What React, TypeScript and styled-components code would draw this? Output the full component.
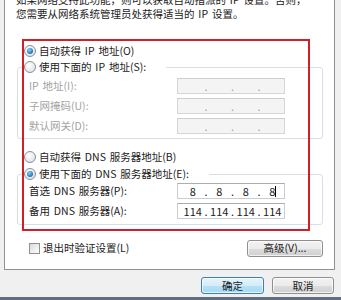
import React from "react";
import styled, { createGlobalStyle } from "styled-components";

const Global = createGlobalStyle`
  html, body { margin: 0; padding: 0; background: #f0f0f0; }
  * { box-sizing: border-box; }
`;

const Root = styled.div`
  position: relative;
  width: 341px;
  height: 300px;
  overflow: hidden;
  background: #f0f0f0;
  display: flex;
  flex-direction: column;
  font-family: "Noto Sans CJK SC", "Liberation Sans", sans-serif;
  font-size: 10.5px;
  word-spacing: 1.5px;
  color: #1a1a1a;
`;

const Panel = styled.div`
  margin: -10px 6px 0 4px;
  height: 280px;
  flex: none;
  background: #ffffff;
  border: 1px solid #8e9297;
  display: flex;
  flex-direction: column;
`;

const Intro = styled.div`
  margin-top: 2px;
  padding-left: 11px;
  line-height: 14px;
  white-space: nowrap;
`;

const Content = styled.div`
  padding: 0 11px 0 12px;
  display: flex;
  flex-direction: column;
`;

const OptionRow = styled.div<{ $top: number }>`
  margin-top: ${(p) => p.$top}px;
  padding-left: 7px;
  height: 14px;
  display: flex;
  align-items: center;
  line-height: 14px;
  white-space: nowrap;
`;

const Radio = styled.span<{ $on?: boolean }>`
  width: 12px;
  height: 12px;
  border-radius: 50%;
  border: 1px solid #8a8f96;
  background: radial-gradient(circle at 40% 35%, #ffffff 0%, #e4e6e8 70%, #d0d3d6 100%);
  display: inline-flex;
  align-items: center;
  justify-content: center;
  margin-right: 3px;
  flex: none;
  &::after {
    content: "";
    display: ${(p) => (p.$on ? "block" : "none")};
    width: 6px;
    height: 6px;
    border-radius: 50%;
    background: radial-gradient(circle at 40% 35%, #8fd0f7 0%, #2b7fc4 60%, #1a4f86 100%);
  }
`;

const Group = styled.fieldset<{ $top: number; $pt: number; $pb: number }>`
  margin: ${(p) => p.$top}px 0 0 0;
  padding: ${(p) => p.$pt}px 0 ${(p) => p.$pb}px 0;
  border: 1px solid #d5dfe5;
  border-radius: 3px;
  min-inline-size: 0;
  display: flex;
  flex-direction: column;
  gap: 4px;
`;

const Legend = styled.legend`
  margin-left: 6px;
  padding: 0 20px 0 0;
  height: 14px;
  line-height: 14px;
  display: flex;
  align-items: center;
  white-space: nowrap;
`;

const FieldRow = styled.div`
  display: grid;
  grid-template-columns: 148px 108px;
  align-items: center;
  height: 16px;
  padding-left: 11px;
`;

const FieldLabel = styled.span<{ $disabled?: boolean }>`
  color: ${(p) => (p.$disabled ? "#a3a3a3" : "#1a1a1a")};
  white-space: nowrap;
  line-height: 14px;
`;

const IpBox = styled.div<{ $disabled?: boolean }>`
  position: relative;
  width: 108px;
  height: 16px;
  border: 1px solid ${(p) => (p.$disabled ? "#d6d6d6" : "#c9ccd1")};
  border-top-color: ${(p) => (p.$disabled ? "#cfcfcf" : "#abadb3")};
  background: ${(p) => (p.$disabled ? "#f4f4f4" : "#ffffff")};
  display: flex;
  align-items: center;
  padding-left: 3px;
  color: ${(p) => (p.$disabled ? "#a0a0a0" : "#1a1a1a")};
  font-size: 11px;
  line-height: 14px;
  word-spacing: 0;
`;

const Seg = styled.span`
  width: 24px;
  text-align: center;
  white-space: nowrap;
`;

const Dot = styled.span`
  width: 3px;
  text-align: center;
`;

const Caret = styled.span`
  position: absolute;
  right: 8px;
  top: 2px;
  width: 1px;
  height: 11px;
  background: #000;
`;

const BottomRow = styled.div`
  margin-top: 14px;
  height: 18px;
  display: flex;
  align-items: center;
  justify-content: space-between;
  padding-left: 12px;
`;

const CheckLabel = styled.label`
  display: flex;
  align-items: center;
  white-space: nowrap;
  line-height: 14px;
`;

const CheckBox = styled.span`
  width: 11px;
  height: 11px;
  border: 1px solid #8f8f8f;
  background: linear-gradient(135deg, #d9d9d9 0%, #f0f0f0 60%, #fbfbfb 100%);
  margin-right: 3px;
  flex: none;
`;

const Button = styled.button<{ $default?: boolean; $w: number }>`
  width: ${(p) => p.$w}px;
  height: 17px;
  padding: 0;
  font-family: inherit;
  font-size: 10.5px;
  word-spacing: 1px;
  line-height: 14px;
  color: #1a1a1a;
  border-radius: 3px;
  border: 1px solid ${(p) => (p.$default ? "#3c7fb1" : "#8e8f8f")};
  background: ${(p) =>
    p.$default
      ? "linear-gradient(#e5f4fc 0%, #d3ecf9 50%, #b6e0f6 51%, #a7d9f5 100%)"
      : "linear-gradient(#f2f2f2 0%, #ebebeb 50%, #dddddd 51%, #cfcfcf 100%)"};
  box-shadow: inset 0 0 0 1px rgba(255, 255, 255, 0.7);
`;

const Footer = styled.div`
  margin-top: 7px;
  display: flex;
  justify-content: flex-end;
  gap: 8px;
  padding-right: 7px;
`;

const Strip = styled.div`
  margin-top: auto;
  height: 3px;
  background: #5f6f82;
`;

const Highlight = styled.div`
  position: absolute;
  left: 22px;
  top: 39px;
  width: 288px;
  height: 192px;
  border: 2px solid #d01f27;
  pointer-events: none;
`;

function Ip({ parts, disabled, caret }: { parts: string[]; disabled?: boolean; caret?: boolean }) {
  return (
    <IpBox $disabled={disabled}>
      <Seg>{parts[0]}</Seg>
      <Dot>.</Dot>
      <Seg>{parts[1]}</Seg>
      <Dot>.</Dot>
      <Seg>{parts[2]}</Seg>
      <Dot>.</Dot>
      <Seg>{parts[3]}</Seg>
      {caret && <Caret />}
    </IpBox>
  );
}

const empty = ["", "", "", ""];

export default function App() {
  return (
    <Root>
      <Global />
      <Panel>
        <Intro>
          如果网络支持此功能，则可以获取自动指派的 IP 设置。否则，
          <br />
          您需要从网络系统管理员处获得适当的 IP 设置。
        </Intro>
        <Content>
          <OptionRow $top={23}>
            <Radio $on />
            自动获得 IP 地址(O)
          </OptionRow>
          <Group $top={2} $pt={4} $pb={4}>
            <Legend>
              <Radio />
              使用下面的 IP 地址(S):
            </Legend>
            <FieldRow>
              <FieldLabel $disabled>IP 地址(I):</FieldLabel>
              <Ip parts={empty} disabled />
            </FieldRow>
            <FieldRow>
              <FieldLabel $disabled>子网掩码(U):</FieldLabel>
              <Ip parts={empty} disabled />
            </FieldRow>
            <FieldRow>
              <FieldLabel $disabled>默认网关(D):</FieldLabel>
              <Ip parts={empty} disabled />
            </FieldRow>
          </Group>
          <OptionRow $top={11}>
            <Radio />
            自动获得 DNS 服务器地址(B)
          </OptionRow>
          <Group $top={3} $pt={2} $pb={5}>
            <Legend>
              <Radio $on />
              使用下面的 DNS 服务器地址(E):
            </Legend>
            <FieldRow>
              <FieldLabel>首选 DNS 服务器(P):</FieldLabel>
              <Ip parts={["8", "8", "8", "8"]} caret />
            </FieldRow>
            <FieldRow>
              <FieldLabel>备用 DNS 服务器(A):</FieldLabel>
              <Ip parts={["114", "114", "114", "114"]} />
            </FieldRow>
          </Group>
          <BottomRow>
            <CheckLabel>
              <CheckBox />
              退出时验证设置(L)
            </CheckLabel>
            <Button $w={76}>高级(V)...</Button>
          </BottomRow>
        </Content>
      </Panel>
      <Footer>
        <Button $default $w={63}>确定</Button>
        <Button $w={62}>取消</Button>
      </Footer>
      <Strip />
      <Highlight />
    </Root>
  );
}
